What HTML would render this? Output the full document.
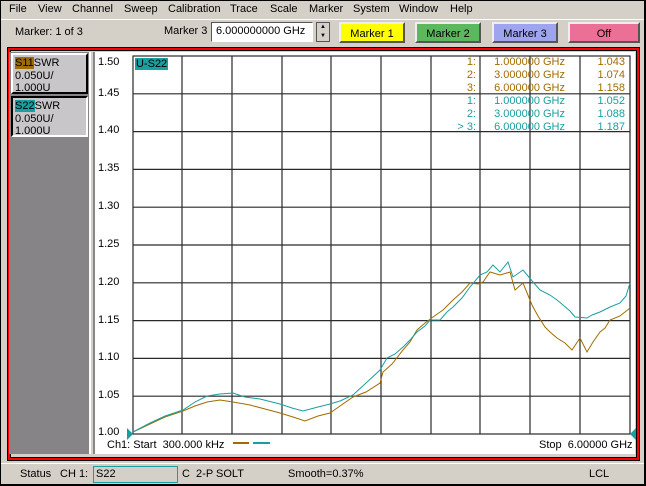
<!DOCTYPE html><html><head><style>
*{margin:0;padding:0;box-sizing:border-box}
body{width:646px;height:486px;background:#000;font-family:"Liberation Sans",sans-serif;font-size:11px;position:relative;overflow:hidden}
.a{position:absolute}
#win{left:1px;top:1px;width:643px;height:483px;background:#d4d0c8}
.menu span{position:absolute;top:0}
.btn{position:absolute;top:22px;height:21px;width:66px;text-align:center;line-height:20px;border:2px solid;border-color:#eee #555 #555 #eee}
.tb{position:absolute;left:11px;width:77px;height:41px;background:#c8c6c8;border:2px solid;border-color:#fff #000 #000 #fff;font-size:11px;line-height:12.5px;padding:2px 0 0 2px}
.ax{position:absolute;left:98px;width:30px;font-size:11px}
.m{position:absolute;font-size:11px;text-align:right}
</style></head><body>
<div id="win" class="a"></div>
<div class="a menu" style="left:0;top:3px;font-size:11px"><span style="left:9px">File</span><span style="left:38px">View</span><span style="left:72px">Channel</span><span style="left:124px">Sweep</span><span style="left:168px">Calibration</span><span style="left:230px">Trace</span><span style="left:270px">Scale</span><span style="left:309px">Marker</span><span style="left:353px">System</span><span style="left:399px">Window</span><span style="left:450px">Help</span></div>
<div class="a" style="left:1px;top:19px;width:643px;height:1px;background:#fff"></div>
<div class="a" style="left:15px;top:26px">Marker: 1 of 3</div>
<div class="a" style="left:164px;top:25px">Marker 3</div>
<div class="a" style="left:211px;top:22px;width:102px;height:20px;background:#fff;border:1px solid;border-color:#555 #fff #fff #555;padding:2px 4px">6.000000000 GHz</div>
<div class="a" style="left:316px;top:22px;width:14px;height:20px;background:#d4d0c8;border:1px solid #555;font-size:6px;text-align:center;line-height:9px">▲<br>▼</div>
<div class="btn" style="left:339px;background:#ffff00">Marker 1</div>
<div class="btn" style="left:415px;background:#5cb85c">Marker 2</div>
<div class="btn" style="left:492px;background:#9fa4ee">Marker 3</div>
<div class="btn" style="left:568px;background:#ec6f97;width:72px">Off</div>
<div class="a" style="left:7px;top:47px;width:633px;height:414px;border:1px solid #000"></div>
<div class="a" style="left:8px;top:48px;width:631px;height:412px;border:2px solid #f00"></div>
<div class="a" style="left:10px;top:50px;width:627px;height:408px;border:1px solid #000;background:#d4d0c8"></div>
<div class="a" style="left:9px;top:52px;width:82px;height:402px;background:#868487;border-right:2px solid #fff"></div>
<div class="tb" style="top:53px"><span style="background:#a06c00">S11</span>SWR<br>0.050U/<br>1.000U</div>
<div class="tb" style="top:96px;border-color:#000 #fff #fff #000"><span style="background:#1a9fa0">S22</span>SWR<br>0.050U/<br>1.000U</div>
<div class="a" style="left:93px;top:52px;width:542px;height:402px;background:#fff;border-left:2px solid #888"></div>
<div class="ax" style="top:56px">1.50</div><div class="ax" style="top:87px">1.45</div><div class="ax" style="top:124px">1.40</div><div class="ax" style="top:162px">1.35</div><div class="ax" style="top:200px">1.30</div><div class="ax" style="top:238px">1.25</div><div class="ax" style="top:276px">1.20</div><div class="ax" style="top:314px">1.15</div><div class="ax" style="top:351px">1.10</div><div class="ax" style="top:389px">1.05</div><div class="ax" style="top:426px">1.00</div>
<svg class="a" style="left:0;top:0" width="646" height="486">
<g stroke="#2a2a2a" stroke-width="1.2" fill="none">
<rect x="133" y="56" width="497" height="378"/>
<path d="M182 56V434M232 56V434M282 56V434M331 56V434M381 56V434M431 56V434M480 56V434M530 56V434M580 56V434M133 93.8H630M133 131.6H630M133 169.4H630M133 207.2H630M133 245H630M133 282.8H630M133 320.6H630M133 358.4H630M133 396.2H630"/>
</g>
<polyline fill="none" stroke="#a06c00" stroke-width="1" points="133,432 150,424 165,417 183,411 195,406 207,402 220,400 233,402 250,405 265,409 280,413 293,417 305,421 318,416 330,413 340,406 353,397 366,392 380,383 383,372 392,364 403,350 410,342 417,330 425,323 433,317 443,310 453,300 462,292 470,283 478,284 483,282 490,272 500,275 510,272 515,290 523,283 532,305 538,316 545,327 550,332 557,338 565,343 572,350 580,338 587,352 593,342 600,332 605,328 610,320 620,316 630,308"/>
<polyline fill="none" stroke="#1a9fa0" stroke-width="1" points="133,432 150,423 165,416 183,410 195,402 207,396 220,394 233,393 245,397 260,399 280,404 292,408 303,411 318,407 330,404 340,401 353,395 366,383 380,370 387,358 395,354 403,347 410,340 417,332 425,326 430,320 440,320 447,312 453,307 462,298 470,287 480,275 487,272 493,265 500,272 508,262 513,277 523,270 533,282 540,290 550,295 557,300 563,305 570,311 575,317 587,318 592,315 600,312 610,307 620,303 626,296 630,283"/>
<path d="M127 428L133 434L127 440Z M630 434L636 428L636 440Z" fill="#1a9fa0"/>
<path d="M233 443H249" stroke="#a06c00" stroke-width="2"/><path d="M253 443H270" stroke="#1a9fa0" stroke-width="2"/>
</svg>
<div class="a" style="left:135px;top:58px;background:#1a9fa0;padding:0 1px">U-S22</div>
<div class="a" style="left:0;top:56px;width:626px;color:#a06c00">
<div class="m" style="left:420px;top:0;width:56px">1:</div><div class="m" style="left:480px;top:0;width:85px">1.000000 GHz</div><div class="m" style="left:570px;top:0;width:55px">1.043</div>
<div class="m" style="left:420px;top:13px;width:56px">2:</div><div class="m" style="left:480px;top:13px;width:85px">3.000000 GHz</div><div class="m" style="left:570px;top:13px;width:55px">1.074</div>
<div class="m" style="left:420px;top:26px;width:56px">3:</div><div class="m" style="left:480px;top:26px;width:85px">6.000000 GHz</div><div class="m" style="left:570px;top:26px;width:55px">1.158</div>
</div>
<div class="a" style="left:0;top:95px;width:626px;color:#1a9fa0">
<div class="m" style="left:420px;top:0;width:56px">1:</div><div class="m" style="left:480px;top:0;width:85px">1.000000 GHz</div><div class="m" style="left:570px;top:0;width:55px">1.052</div>
<div class="m" style="left:420px;top:13px;width:56px">2:</div><div class="m" style="left:480px;top:13px;width:85px">3.000000 GHz</div><div class="m" style="left:570px;top:13px;width:55px">1.088</div>
<div class="m" style="left:420px;top:26px;width:56px">&gt; 3:</div><div class="m" style="left:480px;top:26px;width:85px">6.000000 GHz</div><div class="m" style="left:570px;top:26px;width:55px">1.187</div>
</div>
<div class="a" style="left:107px;top:439px">Ch1: Start &nbsp;300.000 kHz</div>
<div class="a" style="left:539px;top:439px">Stop &nbsp;6.00000 GHz</div>
<div class="a" style="left:1px;top:463px;width:643px;height:1px;background:#fff"></div>
<div class="a" style="left:20px;top:468px">Status</div>
<div class="a" style="left:60px;top:468px">CH 1:</div>
<div class="a" style="left:93px;top:466px;width:85px;height:17px;border:1px solid #1a9fa0;padding:1px 2px">S22</div>
<div class="a" style="left:182px;top:468px">C &nbsp;2-P SOLT</div>
<div class="a" style="left:288px;top:468px">Smooth=0.37%</div>
<div class="a" style="left:589px;top:468px">LCL</div>
</body></html>
